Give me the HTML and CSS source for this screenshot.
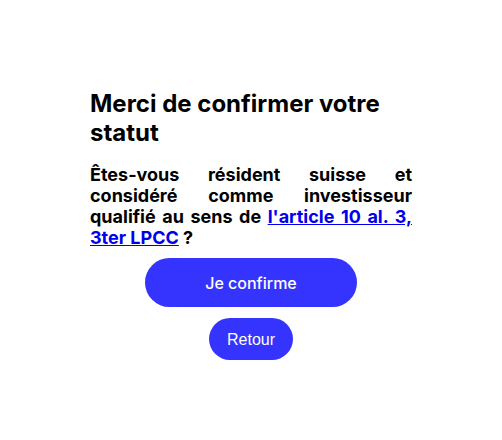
FILE: index.html
```html
<!DOCTYPE html>
<html lang="fr">
<head>
    <meta charset="UTF-8">
    <meta name="viewport" content="width=device-width, initial-scale=1.0">
    <title>Confirmation du statut</title>
    <link rel="stylesheet" href="styles.css">
</head>
<body>
    <div class="modal">
        <h1>Merci de confirmer votre statut</h1>
        <p class="question">Êtes-vous résident suisse et considéré comme investisseur qualifié au sens de <a href="#">l'article 10 al. 3, 3ter LPCC</a> ?</p>
        <div class="actions">
            <button class="btn btn-confirm">Je confirme</button>
            <button class="btn btn-back">Retour</button>
        </div>
    </div>
</body>
</html>
```

FILE: styles.css
```css
:root {
    --primary-blue: #3434fe;
    --text-dark: #000;
    --text-light: #fff;
    --link-blue: #0000ee;
}

body {
    font-family: Inter, "Noto Sans", Arial, sans-serif;
    background-color: #fff;
    color: var(--text-dark);
    margin: 0;
    padding: 0;
}

.modal {
    width: 322px;
    margin: 0 auto;
    padding-top: 89px;
}

h1 {
    font-size: 24px;
    line-height: 29px;
    font-weight: 700;
    margin: 0;
}

.question {
    font-size: 18px;
    line-height: 21px;
    font-weight: 700;
    text-align: justify;
    margin: 17px 0 10px;
}

.question a {
    color: var(--link-blue);
}

.actions {
    display: flex;
    flex-direction: column;
    align-items: center;
    gap: 11px;
}

.btn {
    background-color: var(--primary-blue);
    color: var(--text-light);
    border: none;
    cursor: pointer;
    padding: 0;
}

.btn-confirm {
    width: 212px;
    height: 49px;
    border-radius: 25px;
    font-family: Inter, sans-serif;
    font-size: 16px;
    font-weight: 500;
}

.btn-back {
    width: 84px;
    height: 42px;
    border-radius: 21px;
    font-family: "Liberation Sans", Arial, sans-serif;
    font-size: 16px;
    padding-top: 1px;
}
```
